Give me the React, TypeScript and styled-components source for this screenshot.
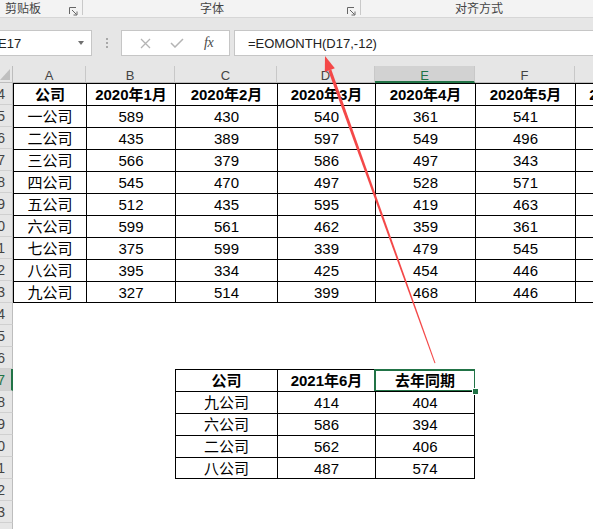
import { Fragment } from 'react';
import styled, { createGlobalStyle } from 'styled-components';

const GlobalStyle = createGlobalStyle`
  body {
    margin: 0;
    background: #ffffff;
    font-family: 'Liberation Sans', 'Noto Sans CJK SC', sans-serif;
  }
`;

const COLS = ['A', 'B', 'C', 'D', 'E', 'F', 'G'];
const COL_W = [73, 89, 102, 98, 100, 100, 100];
const ROWS = Array.from({ length: 21 }, (_, i) => i + 4);
const SEL_COL = 4; // E
const SEL_ROW = 17;

const months = ['2020年1月', '2020年2月', '2020年3月', '2020年4月', '2020年5月', '2020年6月'];
const companies: string[][] = [
  ['一公司', '589', '430', '540', '361', '541'],
  ['二公司', '435', '389', '597', '549', '496'],
  ['三公司', '566', '379', '586', '497', '343'],
  ['四公司', '545', '470', '497', '528', '571'],
  ['五公司', '512', '435', '595', '419', '463'],
  ['六公司', '599', '561', '462', '359', '361'],
  ['七公司', '375', '599', '339', '479', '545'],
  ['八公司', '395', '334', '425', '454', '446'],
  ['九公司', '327', '514', '399', '468', '446'],
];
const summary: string[][] = [
  ['公司', '2021年6月', '去年同期'],
  ['九公司', '414', '404'],
  ['六公司', '586', '394'],
  ['二公司', '562', '406'],
  ['八公司', '487', '574'],
];

type CellInfo = {
  text: string;
  bold?: boolean;
  bordered?: boolean;
  lastRow?: boolean;
  lastCol?: boolean;
};

const getCell = (row: number, col: number): CellInfo => {
  // main table A4:G13
  if (row >= 4 && row <= 13) {
    let text = '';
    if (row === 4) text = col === 0 ? '公司' : months[col - 1];
    else text = companies[row - 5][col] || '';
    return { text, bold: row === 4, bordered: true, lastRow: row === 13, lastCol: col === 6 };
  }
  // summary table C17:E21
  if (row >= 17 && row <= 21 && col >= 2 && col <= 4) {
    return {
      text: summary[row - 17][col - 2],
      bold: row === 17,
      bordered: true,
      lastRow: row === 21,
      lastCol: col === 4,
    };
  }
  return { text: '' };
};

const Frame = styled.div`
  position: relative;
  width: 593px;
  height: 529px;
  overflow: hidden;
  background: #ffffff;
`;

const Ribbon = styled.div`
  display: flex;
  height: 17px;
  background: #f3f3f3;
  border-bottom: 1px solid #d6d6d6;
`;

const RibbonGroup = styled.div<{ $width: number; $align?: 'left' | 'center' }>`
  display: flex;
  align-items: flex-start;
  flex: none;
  width: ${(p) => p.$width}px;
  height: 15px;
  border-right: 1px solid #c9c9c9;
  .label {
    flex: 1;
    text-align: ${(p) => p.$align || 'center'};
    padding-left: ${(p) => (p.$align === 'left' ? '5px' : '0')};
    font-family: 'Noto Sans CJK SC', sans-serif;
    font-size: 12px;
    line-height: 16px;
    color: #444444;
  }
`;

const Launcher = styled.svg`
  flex: none;
  margin: 7px 4px 0 0;
`;

const FormulaBand = styled.div`
  display: flex;
  align-items: center;
  height: 48px;
  padding: 2px 0 0;
  box-sizing: border-box;
  background: #e6e6e6;
`;

const Box = styled.div<{ $width?: number }>`
  display: flex;
  align-items: center;
  flex: ${(p) => (p.$width ? 'none' : '1')};
  width: ${(p) => (p.$width ? `${p.$width}px` : 'auto')};
  height: 26px;
  box-sizing: border-box;
  background: #ffffff;
  border: 1px solid #c6c6c6;
  font-size: 13px;
  color: #222222;
`;

const NameBox = styled(Box)`
  margin-left: -6px;
  padding: 0 7px 0 3px;
  justify-content: space-between;
`;

const DropArrow = styled.span`
  width: 0;
  height: 0;
  border-left: 3.5px solid transparent;
  border-right: 3.5px solid transparent;
  border-top: 4px solid #707070;
`;

const Grip = styled.div`
  display: flex;
  flex-direction: column;
  gap: 2px;
  margin: 0 13px 0 14px;
  span {
    width: 2px;
    height: 2px;
    background: #a8a8a8;
  }
`;

const FuncBox = styled(Box)`
  justify-content: space-around;
  padding: 0 6px 0 8px;
  margin-right: 4px;
`;

const Fx = styled.span`
  font-family: 'Liberation Serif', serif;
  font-style: italic;
  font-size: 14px;
  color: #4a4a4a;
  letter-spacing: -0.5px;
`;

const FormulaInput = styled(Box)`
  padding-left: 13px;
  border-right: none;
`;

const Sheet = styled.div`
  display: grid;
  grid-template-columns: 13px ${COL_W.map((w) => `${w}px`).join(' ')};
  grid-template-rows: 17px repeat(${ROWS.length}, 22px);
`;

const Corner = styled.div`
  position: relative;
  background: #e6e6e6;
  border-right: 1px solid #bdbdbd;
  border-bottom: 1px solid #bdbdbd;
  box-sizing: border-box;
  &::after {
    content: '';
    position: absolute;
    right: 2px;
    bottom: 2px;
    width: 0;
    height: 0;
    border-left: 10px solid transparent;
    border-bottom: 11px solid #bfbfbf;
  }
`;

const ColHead = styled.div<{ $active?: boolean }>`
  box-sizing: border-box;
  background: ${(p) => (p.$active ? '#d2d2d2' : '#e6e6e6')};
  border-right: 1px solid #c8c8c8;
  border-bottom: ${(p) => (p.$active ? '2px solid #217346' : '1px solid #bdbdbd')};
  color: ${(p) => (p.$active ? '#217346' : '#444444')};
  font-size: 13px;
  line-height: 17px;
  padding-top: 1px;
  text-align: center;
`;

const RowHead = styled.div<{ $active?: boolean }>`
  box-sizing: border-box;
  overflow: hidden;
  background: ${(p) => (p.$active ? '#d2d2d2' : '#e6e6e6')};
  border-right: ${(p) => (p.$active ? '2px solid #217346' : '1px solid #bdbdbd')};
  border-bottom: 1px solid #d0d0d0;
  color: ${(p) => (p.$active ? '#217346' : '#444444')};
  font-size: 14px;
  line-height: 22px;
  text-align: right;
  padding-right: ${(p) => (p.$active ? '6px' : '7px')};
  white-space: nowrap;
  direction: rtl;
`;

const Cell = styled.div<{
  $bordered?: boolean;
  $bold?: boolean;
  $lastRow?: boolean;
  $lastCol?: boolean;
  $selected?: boolean;
}>`
  position: relative;
  box-sizing: border-box;
  background: #ffffff;
  border-top: ${(p) => (p.$bordered ? '1px solid #000' : 'none')};
  border-left: ${(p) => (p.$bordered ? '1px solid #000' : 'none')};
  border-bottom: ${(p) => (p.$lastRow ? '1px solid #000' : 'none')};
  border-right: ${(p) => (p.$lastCol ? '1px solid #000' : 'none')};
  font-size: 15px;
  font-weight: ${(p) => (p.$bold ? 700 : 400)};
  line-height: 21px;
  color: #000000;
  text-align: center;
  white-space: nowrap;
  ${(p) =>
    p.$selected &&
    `
    &::after {
      content: '';
      position: absolute;
      left: -2px;
      top: -1px;
      right: -2px;
      bottom: -1px;
      border: 2px solid #217346;
    }
    &::before {
      content: '';
      position: absolute;
      right: -5px;
      bottom: -4px;
      width: 5px;
      height: 5px;
      background: #217346;
      border: 1px solid #ffffff;
      z-index: 2;
    }
  `}
`;

const ArrowLayer = styled.svg`
  position: absolute;
  left: 0;
  top: 0;
  pointer-events: none;
`;

const RibbonLauncher = () => (
  <Launcher width="9" height="9" viewBox="0 0 9 9">
    <path d="M0.5 7 V0.5 H7" fill="none" stroke="#666" strokeWidth="1" />
    <path d="M3 3 L7.5 7.5" stroke="#666" strokeWidth="1" />
    <path d="M4.5 8 H8 V4.5" fill="none" stroke="#666" strokeWidth="1" />
  </Launcher>
);

const App = () => {
  return (
    <Frame>
      <GlobalStyle />
      <Ribbon>
        <RibbonGroup $width={82} $align="left">
          <span className="label">剪贴板</span>
          <RibbonLauncher />
        </RibbonGroup>
        <RibbonGroup $width={277}>
          <span className="label" style={{ paddingRight: 6 }}>
            字体
          </span>
          <RibbonLauncher />
        </RibbonGroup>
        <RibbonGroup $width={236}>
          <span className="label">对齐方式</span>
        </RibbonGroup>
      </Ribbon>

      <FormulaBand>
        <NameBox $width={98}>
          <span>E17</span>
          <DropArrow />
        </NameBox>
        <Grip>
          <span />
          <span />
          <span />
        </Grip>
        <FuncBox $width={109}>
          <svg width="11" height="11" viewBox="0 0 11 11">
            <path d="M1 1 L10 10 M10 1 L1 10" stroke="#b4b4b4" strokeWidth="1.3" />
          </svg>
          <svg width="14" height="10" viewBox="0 0 14 10">
            <path d="M1 5 L5 9 L13 1" fill="none" stroke="#b4b4b4" strokeWidth="1.5" />
          </svg>
          <Fx>fx</Fx>
        </FuncBox>
        <FormulaInput>=EOMONTH(D17,-12)</FormulaInput>
      </FormulaBand>

      <Sheet>
        <Corner />
        {COLS.map((c, i) => (
          <ColHead key={c} $active={i === SEL_COL}>
            {c}
          </ColHead>
        ))}
        {ROWS.map((r) => (
          <Fragment key={r}>
            <RowHead $active={r === SEL_ROW}>{r}</RowHead>
            {COLS.map((c, ci) => {
              const info = getCell(r, ci);
              return (
                <Cell
                  key={`${c}${r}`}
                  $bordered={info.bordered}
                  $bold={info.bold}
                  $lastRow={info.lastRow}
                  $lastCol={info.lastCol}
                  $selected={r === SEL_ROW && ci === SEL_COL}
                >
                  {info.text}
                </Cell>
              );
            })}
          </Fragment>
        ))}
      </Sheet>

      <ArrowLayer width="593" height="529" viewBox="0 0 593 529">
        <polygon points="435.5,363 434.5,363.3 328.3,70.7 331.3,69.6" fill="#f44848" />
        <polygon points="325,56 334.8,68.3 324.8,71.9" fill="#f44848" />
      </ArrowLayer>
    </Frame>
  );
};

export default App;
